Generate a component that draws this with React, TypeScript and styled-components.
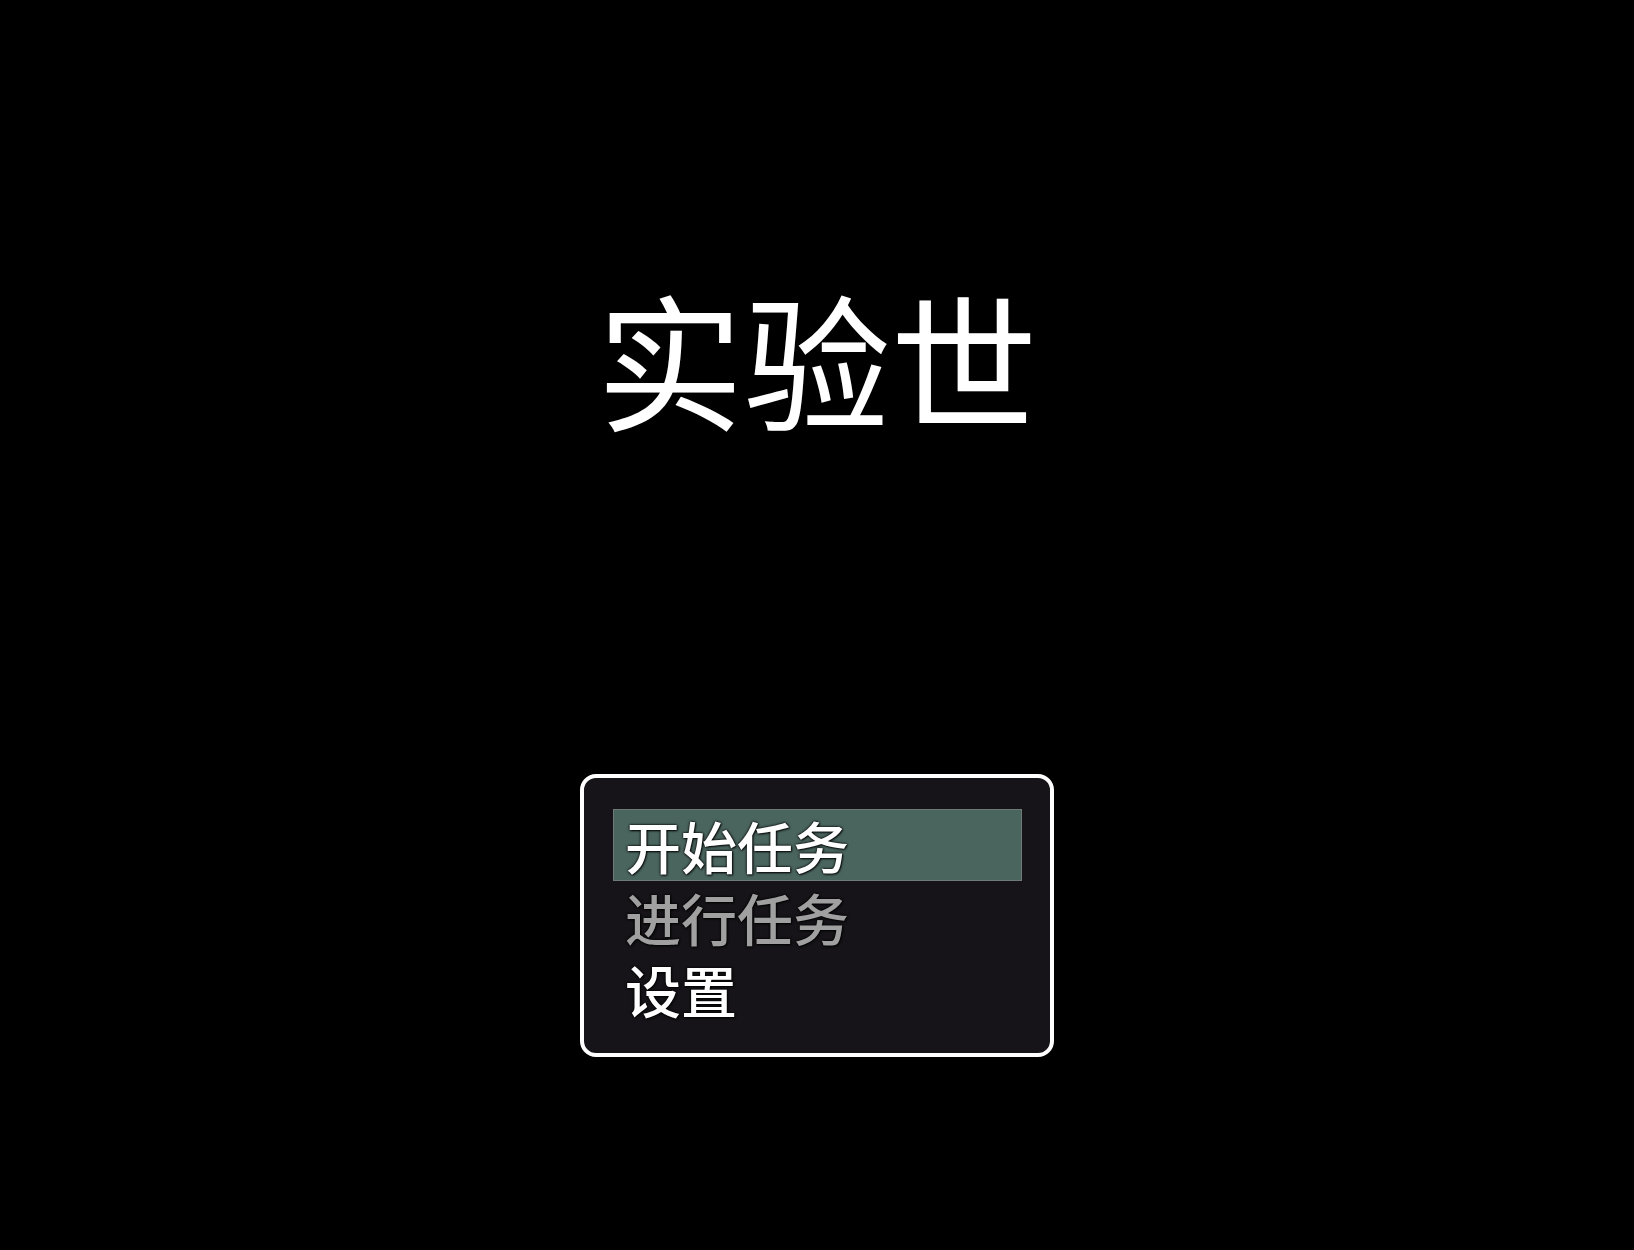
import React from "react";
import styled, { createGlobalStyle } from "styled-components";

const GlobalStyle = createGlobalStyle`
  html, body {
    margin: 0;
    padding: 0;
    background: #000;
  }
  body {
    font-family: "Noto Sans CJK SC", "Noto Sans", sans-serif;
  }
`;

interface MenuItem {
  label: string;
  enabled: boolean;
}

const items: MenuItem[] = [
  { label: "开始任务", enabled: true },
  { label: "进行任务", enabled: false },
  { label: "设置", enabled: true },
];

const App: React.FC = () => {
  const selected = 0;
  return (
    <>
      <GlobalStyle />
      <Screen>
        <Title>实验世</Title>
        <CommandWindow>
          {items.map((item, i) => (
            <Command key={item.label} active={i === selected} enabled={item.enabled}>
              {item.label}
            </Command>
          ))}
        </CommandWindow>
      </Screen>
    </>
  );
};

export default App;

const Screen = styled.div`
  width: 1634px;
  height: 1250px;
  background: #000;
  display: flex;
  flex-direction: column;
  align-items: center;
  overflow: hidden;
`;

const Title = styled.h1`
  margin: 282px 0 0;
  font-size: 147px;
  line-height: 1;
  font-weight: 400;
  color: #fff;
`;

const CommandWindow = styled.div`
  margin-top: 345px;
  box-sizing: border-box;
  width: 474px;
  height: 283px;
  padding: 31px 28px 28px 29px;
  border: 4px solid #fff;
  border-radius: 16px;
  background: #161418;
  display: flex;
  flex-direction: column;
`;

const Command = styled.div<{ active: boolean; enabled: boolean }>`
  box-sizing: border-box;
  height: 72px;
  padding-left: 11px;
  font-size: 56px;
  font-weight: 500;
  line-height: 70px;
  color: ${(p) => (p.enabled ? "#fff" : "#a0a0a0")};
  background: ${(p) => (p.active ? "#4a645e" : "transparent")};
  border: 1px solid ${(p) => (p.active ? "#6d7a77" : "transparent")};
  text-shadow:
    0 0 2px rgba(0, 0, 0, 0.9),
    0 0 3px rgba(0, 0, 0, 0.8),
    1px 1px 2px rgba(0, 0, 0, 0.7);
`;
